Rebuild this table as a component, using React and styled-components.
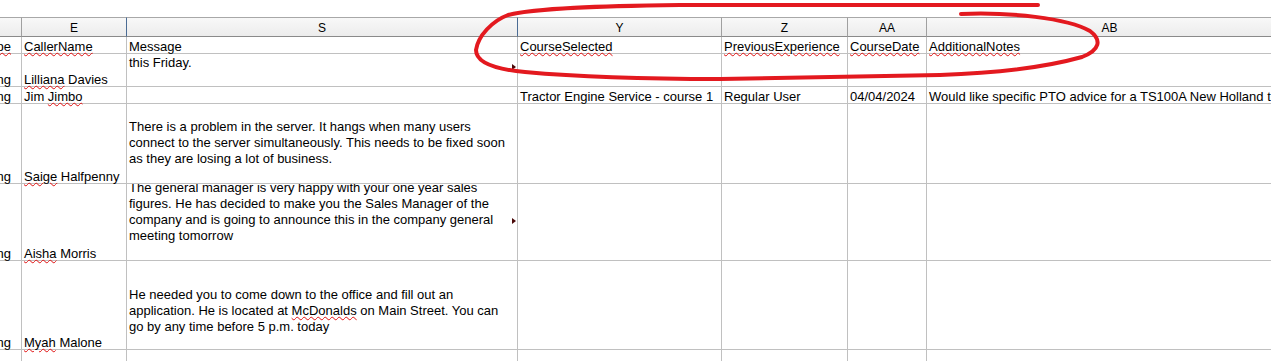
import styled, { createGlobalStyle } from 'styled-components';

const GlobalStyle = createGlobalStyle`
	* {
		box-sizing: border-box;
	}
	html, body {
		margin: 0;
		padding: 0;
		background: #ffffff;
		overflow: hidden;
	}
	body {
		font-family: 'Liberation Sans', Arial, sans-serif;
		font-size: 13px;
		color: #000000;
	}
`;

const Page = styled.div`
	position: relative;
	width: 1271px;
	height: 361px;
	padding-top: 17px;
	overflow: hidden;
`;

const Sheet = styled.div`
	display: grid;
	grid-template-columns: 22px 105px 391px 204px 126px 79px 366px;
	grid-template-rows: 20px 17px 33px 17px 80px 77px 89px 30px;
	width: max-content;
`;

const HeadCell = styled.div`
	display: flex;
	align-items: center;
	justify-content: center;
	background: linear-gradient(#f8f8f8, #ececec);
	border-top: 1px solid #a8a8a8;
	border-bottom: 1px solid #8a8a8a;
	border-right: 1px solid ${(p) => (p.$selected ? '#4b6c94' : '#a0a0a0')};
	font-size: 12px;
	line-height: 16px;
	padding-top: 1px;
`;

const Cell = styled.div`
	position: relative;
	display: flex;
	flex-direction: column;
	justify-content: ${(p) => (p.$top ? 'flex-start' : 'flex-end')};
	align-items: ${(p) => (p.$clipLeft ? 'flex-end' : 'flex-start')};
	padding: ${(p) => (p.$top ? '1px' : '0')} ${(p) => (p.$clipLeft ? '10px' : '2px')} ${(p) => p.$gap || 0}px 2px;
	border-right: 1px solid #c0c0c0;
	border-bottom: 1px solid #c0c0c0;
	line-height: 16px;
	white-space: nowrap;
	overflow-x: clip;
	overflow-y: ${(p) => (p.$wrapped ? 'clip' : 'visible')};
`;

const Line = styled.span`
	display: block;
	margin-bottom: ${(p) => (p.$drop ? '-2px' : '0')};
`;

const Misspelt = styled.span`
	text-decoration: underline wavy #e01010;
	text-decoration-thickness: 1px;
	text-underline-offset: 1px;
`;

const Overflow = styled.span`
	position: absolute;
	right: 1px;
	top: ${(p) => p.$y}px;
	width: 0;
	height: 0;
	border-top: 3px solid transparent;
	border-bottom: 3px solid transparent;
	border-left: 4px solid #4a0808;
`;

const Ring = styled.svg`
	position: absolute;
	left: 0;
	top: 0;
	pointer-events: none;
`;

const columns = [
	{ key: 'd', label: '' },
	{ key: 'e', label: 'E', selected: true },
	{ key: 's', label: 'S', selected: true },
	{ key: 'y', label: 'Y' },
	{ key: 'z', label: 'Z' },
	{ key: 'aa', label: 'AA' },
	{ key: 'ab', label: 'AB' },
];

const rows = [
	{
		d: <Misspelt>Type</Misspelt>,
		e: <Misspelt>CallerName</Misspelt>,
		s: ['Message'],
		y: <Misspelt>CourseSelected</Misspelt>,
		z: <Misspelt>PreviousExperience</Misspelt>,
		aa: <Misspelt>CourseDate</Misspelt>,
		ab: <Misspelt>AdditionalNotes</Misspelt>,
	},
	{
		d: 'Training',
		e: (
			<>
				<Misspelt>Lilliana</Misspelt> Davies
			</>
		),
		s: ['this Friday.'],
		top: true,
		more: 10,
	},
	{
		d: 'Training',
		e: (
			<>
				Jim <Misspelt>Jimbo</Misspelt>
			</>
		),
		s: [''],
		y: 'Tractor Engine Service - course 1',
		z: 'Regular User',
		aa: '04/04/2024',
		ab: 'Would like specific PTO advice for a TS100A New Holland tractor',
	},
	{
		d: 'Training',
		e: (
			<>
				<Misspelt>Saige</Misspelt> Halfpenny
			</>
		),
		s: [
			'There is a problem in the server. It hangs when many users',
			'connect to the server simultaneously. This needs to be fixed soon',
			'as they are losing a lot of business.',
		],
		gap: 16,
	},
	{
		d: 'Training',
		e: (
			<>
				<Misspelt>Aisha</Misspelt> Morris
			</>
		),
		s: [
			'The general manager is very happy with your one year sales',
			'figures. He has decided to make you the Sales Manager of the',
			'company and is going to announce this in the company general',
			'meeting tomorrow',
		],
		gap: 16,
		more: 34,
	},
	{
		d: 'Training',
		e: (
			<>
				<Misspelt>Myah</Misspelt> Malone
			</>
		),
		s: [
			'He needed you to come down to the office and fill out an',
			<>
				application. He is located at <Misspelt>McDonalds</Misspelt> on Main Street. You can
			</>,
			'go by any time before 5 p.m. today',
		],
		gap: 14,
	},
	{ s: [''] },
];

const App = () => {
	return (
		<>
			<GlobalStyle />
			<Page>
				<Sheet>
					{columns.map((col) => (
						<HeadCell key={col.key} $selected={col.selected}>
							{col.label}
						</HeadCell>
					))}
					{rows.map((row, i) =>
						columns.map((col) => {
							if (col.key === 's') {
								return (
									<Cell
										key={i + col.key}
										$top={row.top}
										$gap={row.gap}
										$wrapped={Boolean(row.gap || row.top)}>
										{row.s.map((line, j) => (
											<Line key={j} $drop={!row.gap && !row.top}>
												{line}
											</Line>
										))}
										{row.more && <Overflow $y={row.more} />}
									</Cell>
								);
							}
							return (
								<Cell key={i + col.key} $clipLeft={col.key === 'd'}>
									<Line $drop>{row[col.key]}</Line>
								</Cell>
							);
						})
					)}
				</Sheet>
				<Ring width="1271" height="100" viewBox="0 0 1271 100">
					<path
						d="M1038 5 C900 4 760 4 680 5 C600 6 535 8 508 15 C492 21 478 36 476 50 C476 62 492 69 525 72 C580 77 650 79 720 79 C800 78 880 76 940 75 C1000 73 1050 66 1082 57 C1100 50 1102 40 1090 31 C1067 18 1010 12 961 14"
						fill="none"
						stroke="#e3191f"
						strokeWidth="4"
						strokeLinecap="round"
						strokeLinejoin="round"
					/>
				</Ring>
			</Page>
		</>
	);
};

export default App;
